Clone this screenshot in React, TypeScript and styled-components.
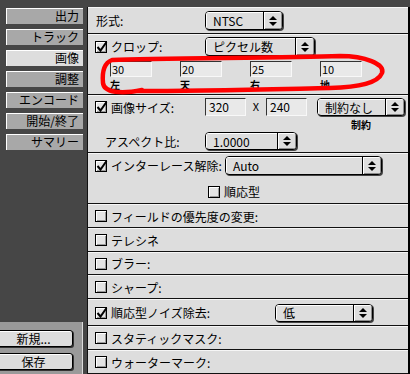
import React from "react";
import styled, { createGlobalStyle } from "styled-components";

const GlobalStyle = createGlobalStyle`
  html, body { margin: 0; padding: 0; width: 410px; height: 374px; overflow: hidden; background: #464646; }
  * { box-sizing: border-box; }
  body { font-family: "Noto Sans CJK JP", "Noto Sans", "DejaVu Sans", sans-serif; font-size: 12px; color: #000; }
`;

const Screen = styled.div`
  position: relative;
  display: flex;
  width: 410px;
  height: 374px;
`;

const Sidebar = styled.div`
  width: 87px;
  display: flex;
  flex-direction: column;
`;

const TabList = styled.div`
  display: flex;
  flex-direction: column;
  gap: 5px;
  padding: 8px 0 0 6px;
`;

const Tab = styled.div<{ $active?: boolean }>`
  width: 77px;
  height: 16px;
  background: ${(p) => (p.$active ? "#dddddd" : "#a8a8a8")};
  border-top: 1px solid #ffffff;
  border-left: 1px solid #ffffff;
  text-align: right;
  padding-right: 4px;
  line-height: 14px;
  font-size: 12px;
  white-space: nowrap;
`;

const BottomArea = styled.div`
  margin-top: auto;
  width: 83px;
  height: 52px;
  background: #9a9a9a;
  border-right: 1px solid #dcdcdc;
  display: flex;
  flex-direction: column;
  gap: 6px;
  padding-top: 8px;
`;

const Button = styled.div`
  margin-left: -6px;
  width: 79px;
  height: 17px;
  background: #dddddd;
  border: 1px solid #000;
  border-radius: 3px;
  box-shadow: inset 1px 1px 0 #fff, 1px 1px 0 #333;
  text-align: center;
  line-height: 15px;
  font-size: 12px;
`;

const Panel = styled.div`
  flex: 1;
  margin-top: 7px;
  background: #dddddd;
  border-left: 1px solid #111;
  border-right: 2px solid #000;
  display: flex;
  flex-direction: column;
`;

const Row = styled.div<{ $h: number; $pad?: number; $col?: boolean }>`
  height: ${(p) => p.$h}px;
  flex: none;
  border-top: 1px solid #f6f6f6;
  border-bottom: 1px solid #111;
  padding-left: ${(p) => p.$pad ?? 7}px;
  display: flex;
  flex-direction: ${(p) => (p.$col ? "column" : "row")};
  align-items: ${(p) => (p.$col ? "stretch" : "center")};
`;

const Line = styled.div<{ $mt?: number; $pl?: number; $h?: number; $top?: boolean }>`
  display: flex;
  align-items: ${(p) => (p.$top ? "flex-start" : "center")};
  margin-top: ${(p) => p.$mt ?? 0}px;
  padding-left: ${(p) => p.$pl ?? 0}px;
  ${(p) => (p.$h ? `height: ${p.$h}px;` : "")}
`;

const Label = styled.div<{ $w: number; $pl?: number }>`
  width: ${(p) => p.$w}px;
  padding-left: ${(p) => p.$pl ?? 0}px;
  white-space: nowrap;
  flex: none;
`;

const CheckLabel = styled.div<{ $w?: number; $h?: number }>`
  display: flex;
  align-items: center;
  gap: 4px;
  ${(p) => (p.$w ? `width: ${p.$w}px;` : "")}
  ${(p) => (p.$h ? `height: ${p.$h}px;` : "")}
  flex: none;
  white-space: nowrap;
`;

const Box = styled.div`
  position: relative;
  width: 12px;
  height: 12px;
  flex: none;
  background: #e4e4e4;
  border: 1px solid #000;
  box-shadow: inset 1px 1px 0 #fff, inset -1px -1px 0 #9a9a9a;
`;

const CheckMark = styled.svg`
  position: absolute;
  left: 0px;
  top: -1px;
`;

const Checkbox = ({ checked }: { checked?: boolean }) => (
  <Box>
    {checked && (
      <CheckMark width="12" height="12" viewBox="0 0 12 12">
        <path d="M1.5 6 L4.5 9.5 L10.5 1" fill="none" stroke="#000" strokeWidth="2" />
      </CheckMark>
    )}
  </Box>
);

const SelectBox = styled.div<{ $w: number; $h: number }>`
  width: ${(p) => p.$w}px;
  height: ${(p) => p.$h}px;
  flex: none;
  display: flex;
  border: 1px solid #000;
  border-radius: 4px;
  background: #dddddd;
  box-shadow: 1px 1px 0 #444;
  overflow: hidden;
`;

const SelectText = styled.div`
  flex: 1;
  padding-left: 7px;
  border-right: 1px solid #000;
  box-shadow: inset 1px 1px 0 #fff;
  display: flex;
  align-items: center;
  white-space: nowrap;
  font-size: 12px;
`;

const SelectArrow = styled.div`
  width: 18px;
  flex: none;
  display: flex;
  align-items: center;
  justify-content: center;
  box-shadow: inset 1px 1px 0 #fff, inset -1px -1px 0 #8a8a8a;
`;

const UpDown = () => (
  <svg width="8" height="10" viewBox="0 0 8 10">
    <path d="M4 0 L8 4 L0 4 Z" fill="#000" />
    <path d="M0 6 L8 6 L4 10 Z" fill="#000" />
  </svg>
);

const Select = ({ w, h, value }: { w: number; h: number; value: string }) => (
  <SelectBox $w={w} $h={h}>
    <SelectText>{value}</SelectText>
    <SelectArrow>
      <UpDown />
    </SelectArrow>
  </SelectBox>
);

const Field = styled.div<{ $w: number; $h: number; $pl?: number; $fs?: number }>`
  width: ${(p) => p.$w}px;
  height: ${(p) => p.$h}px;
  flex: none;
  background: #e9e9e9;
  border-top: 1px solid #333;
  border-left: 1px solid #333;
  border-right: 1px solid #f8f8f8;
  border-bottom: 1px solid #f8f8f8;
  padding-left: ${(p) => p.$pl ?? 1}px;
  font-size: ${(p) => p.$fs ?? 12}px;
  line-height: ${(p) => p.$h - 2}px;
  white-space: nowrap;
`;

const CropGrid = styled.div`
  display: grid;
  grid-template-columns: repeat(4, 70px);
  margin-top: 5px;
  padding-left: 15px;
`;

const CropCell = styled.div`
  display: flex;
  flex-direction: column;
  gap: 2px;
`;

const SmallLabel = styled.div`
  font-size: 10px;
  font-weight: bold;
  line-height: 12px;
  white-space: nowrap;
`;

const Times = styled.div`
  width: 20px;
  text-align: center;
  flex: none;
  font-size: 11px;
`;

const SelectStack = styled.div`
  display: flex;
  flex-direction: column;
  align-items: center;
  gap: 3px;
  margin-left: 10px;
`;

const Annotation = styled.svg`
  position: absolute;
  left: 0;
  top: 0;
  pointer-events: none;
`;

const crops = [
  { v: "30", l: "左" },
  { v: "20", l: "天" },
  { v: "25", l: "右" },
  { v: "10", l: "地" },
];

const tabs = ["出力", "トラック", "画像", "調整", "エンコード", "開始/終了", "サマリー"];

const simpleRows = [
  { label: "フィールドの優先度の変更:", h: 24 },
  { label: "テレシネ", h: 24 },
  { label: "ブラー:", h: 23 },
  { label: "シャープ:", h: 24 },
];

export default function App() {
  return (
    <Screen>
      <GlobalStyle />
      <Sidebar>
        <TabList>
          {tabs.map((t) => (
            <Tab key={t} $active={t === "画像"}>
              {t}
            </Tab>
          ))}
        </TabList>
        <BottomArea>
          <Button>新規...</Button>
          <Button>保存</Button>
        </BottomArea>
      </Sidebar>
      <Panel>
        <Row $h={27} $pad={8}>
          <Label $w={109}>形式:</Label>
          <Select w={78} h={19} value="NTSC" />
        </Row>

        <Row $h={61} $col>
          <Line $mt={2}>
            <CheckLabel $w={110}>
              <Checkbox checked />
              クロップ:
            </CheckLabel>
            <Select w={110} h={19} value="ピクセル数" />
          </Line>
          <CropGrid>
            {crops.map((c) => (
              <CropCell key={c.l}>
                <Field $w={42} $h={16} $fs={11}>
                  {c.v}
                </Field>
                <SmallLabel>{c.l}</SmallLabel>
              </CropCell>
            ))}
          </CropGrid>
        </Row>

        <Row $h={58} $col>
          <Line $mt={2} $top>
            <CheckLabel $w={110} $h={18}>
              <Checkbox checked />
              画像サイズ:
            </CheckLabel>
            <Field $w={41} $h={18} $pl={3}>
              320
            </Field>
            <Times>X</Times>
            <Field $w={41} $h={18} $pl={3}>
              240
            </Field>
            <SelectStack>
              <Select w={88} h={18} value="制約なし" />
              <SmallLabel>制約</SmallLabel>
            </SelectStack>
          </Line>
          <Line $mt={1}>
            <Label $w={110} $pl={10}>
              アスペクト比:
            </Label>
            <Select w={92} h={18} value="1.0000" />
          </Line>
        </Row>

        <Row $h={51} $col>
          <Line $mt={2}>
            <CheckLabel $w={130}>
              <Checkbox checked />
              インターレース解除:
            </CheckLabel>
            <Select w={157} h={19} value="Auto" />
          </Line>
          <Line $mt={8} $pl={113}>
            <CheckLabel>
              <Checkbox />
              順応型
            </CheckLabel>
          </Line>
        </Row>

        {simpleRows.map((r) => (
          <Row key={r.label} $h={r.h}>
            <CheckLabel>
              <Checkbox />
              {r.label}
            </CheckLabel>
          </Row>
        ))}

        <Row $h={27}>
          <CheckLabel $w={180}>
            <Checkbox checked />
            順応型ノイズ除去:
          </CheckLabel>
          <Select w={98} h={18} value="低" />
        </Row>

        <Row $h={24}>
          <CheckLabel>
            <Checkbox />
            スタティックマスク:
          </CheckLabel>
        </Row>
        <Row $h={24}>
          <CheckLabel>
            <Checkbox />
            ウォーターマーク:
          </CheckLabel>
        </Row>
      </Panel>

      <Annotation width="410" height="374" viewBox="0 0 410 374">
        <path
          d="M142 90 C122 94 104 93 103 83 C102 72 104 63 112 60 C160 58 280 58 340 56 C365 56 385 64 382 73 C378 83 360 87 330 88 C280 89 200 91 138 91"
          fill="none"
          stroke="#ff0000"
          strokeWidth="4.5"
          strokeLinecap="round"
          strokeLinejoin="round"
        />
      </Annotation>
    </Screen>
  );
}
